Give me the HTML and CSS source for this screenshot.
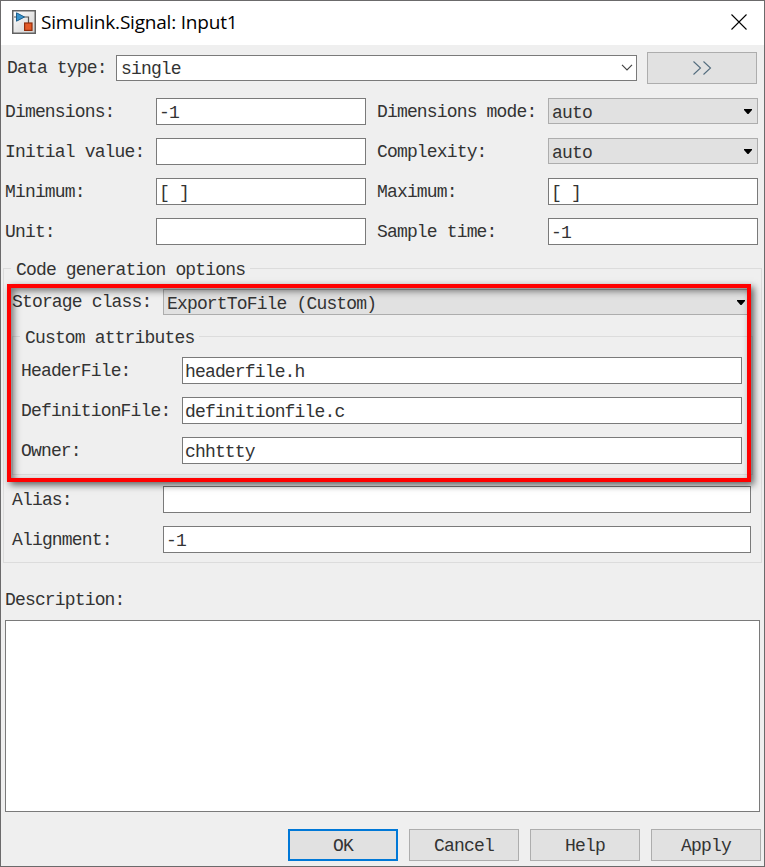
FILE: index.html
```html
<!DOCTYPE html>
<html lang="en">
<head>
<meta charset="utf-8">
<title>Simulink.Signal: Input1</title>
<link rel="stylesheet" href="styles.css">
</head>
<body>
<main class="dialog">
  <header class="titlebar">
    <svg class="app-icon" width="24" height="24" viewBox="0 0 24 24">
      <defs><linearGradient id="bg" x1="0" y1="0" x2="1" y2="1"><stop offset="0" stop-color="#fff"/><stop offset="1" stop-color="#cfcfcf"/></linearGradient></defs>
      <rect x="0.75" y="0.75" width="22.5" height="22.5" fill="url(#bg)" stroke="#626262" stroke-width="1.5"/>
      <path d="M2 7h3M12 7h4.500v6" fill="none" stroke="#555" stroke-width="1.2"/>
      <path d="M4.500 2.800v8.400L12.500 7z" fill="#3a94cc" stroke="#1b5e8c" stroke-width="1"/>
      <rect x="12.600" y="13" width="7.400" height="7.400" fill="#e35a28" stroke="#932d0b" stroke-width="1.2"/>
    </svg>
    <h1 class="title">Simulink.Signal: Input1</h1>
    <svg class="close" width="16" height="16" viewBox="0 0 16 16"><path d="M.5.5l15 15M15.500.5l-15 15" stroke="#000" stroke-width="1.1"/></svg>
  </header>

  <section class="type-row">
    <span class="label">Data type:</span>
    <div class="field combo">single<svg width="12" height="7" viewBox="0 0 12 7"><path d="M1 .8l5 5 5-5" fill="none" stroke="#444" stroke-width="1.2"/></svg></div>
    <div class="button more"><svg width="20" height="16" viewBox="0 0 20 16"><path d="M1.500 1.500l7 6.500-7 6.500M11.500 1.500l7 6.500-7 6.500" fill="none" stroke="#526b7d" stroke-width="1.1"/></svg></div>
  </section>

  <section class="props">
    <span class="label">Dimensions:</span><div class="field">-1</div>
    <span class="label">Dimensions mode:</span><div class="field select">auto<i class="arrow"></i></div>
    <span class="label">Initial value:</span><div class="field"></div>
    <span class="label">Complexity:</span><div class="field select">auto<i class="arrow"></i></div>
    <span class="label">Minimum:</span><div class="field">[ ]</div>
    <span class="label">Maximum:</span><div class="field">[ ]</div>
    <span class="label">Unit:</span><div class="field"></div>
    <span class="label">Sample time:</span><div class="field">-1</div>
  </section>

  <section class="group codegen">
    <h2 class="legend">Code generation options</h2>
    <div class="row storage"><span class="label">Storage class:</span><div class="field select">ExportToFile (Custom)<i class="arrow"></i></div></div>
    <div class="group custom">
      <h3 class="legend">Custom attributes</h3>
      <div class="row"><span class="label">HeaderFile:</span><div class="field">headerfile.h</div></div>
      <div class="row"><span class="label">DefinitionFile:</span><div class="field">definitionfile.c</div></div>
      <div class="row"><span class="label">Owner:</span><div class="field">chhttty</div></div>
    </div>
    <div class="row"><span class="label">Alias:</span><div class="field"></div></div>
    <div class="row"><span class="label">Alignment:</span><div class="field">-1</div></div>
    <div class="highlight"></div>
  </section>

  <section class="description">
    <span class="label">Description:</span>
    <div class="textarea"></div>
  </section>

  <footer class="actions">
    <div class="button primary">OK</div>
    <div class="button">Cancel</div>
    <div class="button">Help</div>
    <div class="button">Apply</div>
  </footer>
</main>
</body>
</html>
```
FILE: styles.css
```css
* { box-sizing: border-box; }

body {
  margin: 0;
  background: #efefef;
}

.dialog {
  width: 765px;
  height: 867px;
  border: 1px solid #6b6a6b;
  background: #efefef;
  color: #333;
  font: 18px/26px "Liberation Mono", monospace;
  letter-spacing: -0.84px;
  display: flex;
  flex-direction: column;
}

.titlebar {
  height: 44px;
  flex: none;
  display: flex;
  align-items: center;
  padding: 0 17px 2px 11px;
  background: #fff;
}

.title {
  flex: 1;
  margin: 0 0 0 5px;
  font: 19px/26px "Open Sans", sans-serif;
  letter-spacing: -0.2px;
  color: #000;
}

.field {
  position: relative;
  height: 27px;
  padding: 1px 0 0 2px;
  border: 1px solid #7a7a7a;
  background: #fff;
  white-space: nowrap;
}

.select {
  height: 26px;
  padding-left: 3px;
  border-color: #adadad;
  background: #e1e1e1;
}

.arrow {
  position: absolute;
  right: 5px;
  top: 10px;
  width: 8px;
  height: 5px;
  background: #000;
  clip-path: polygon(0 0, 100% 0, 100% 20%, 56% 100%, 44% 100%, 0 20%);
}

.button {
  display: flex;
  align-items: center;
  justify-content: center;
  width: 110px;
  height: 32px;
  padding-top: 2px;
  border: 1px solid #adadad;
  background: #e1e1e1;
}

.primary { border: 2px solid #0078d7; }

.type-row {
  display: grid;
  grid-template-columns: 109px 521px 120px;
  height: 32px;
  margin-top: 7px;
  padding-left: 6px;
}

.type-row .label { padding-top: 3px; }

.combo {
  display: flex;
  align-items: center;
  justify-content: space-between;
  height: 26px;
  margin-top: 3px;
  padding: 2px 3px 0 4px;
}

.combo svg { margin-bottom: 3px; }

.more { margin-left: 10px; padding: 0; }

.props {
  display: grid;
  grid-template-columns: 151px 210px 182px 210px;
  grid-auto-rows: 27px;
  row-gap: 13px;
  margin-top: 14px;
  padding-left: 4px;
}

.props .label { padding-top: 1px; }
.props .label:nth-child(4n + 3) { padding-left: 11px; }

.group {
  position: relative;
  border: 1px solid #dcdcdc;
}

.legend {
  width: max-content;
  margin: -12px 0 6px -1px;
  padding: 0 5px;
  font: inherit;
  background: #efefef;
}

.codegen {
  height: 295px;
  margin: 23px 2px 0;
  padding: 0 10px 0 8px;
}

.row {
  display: grid;
  grid-template-columns: 151px 1fr;
  height: 27px;
  margin-bottom: 13px;
}

.row .label { padding-top: 1px; }

.storage { margin-bottom: 20px; }

.storage .label { padding-top: 0; }

.custom {
  height: 139px;
  margin: 0 -2px 11px 0;
  padding: 0 10px 0 8px;
}

.custom .row { grid-template-columns: 161px 1fr; }

.highlight {
  position: absolute;
  left: 3px;
  top: 15px;
  width: 744px;
  height: 198px;
  border: 4px solid #f00;
  box-shadow: 3px 3px 7px rgba(0, 0, 0, 0.6), inset 3px 3px 7px rgba(0, 0, 0, 0.5);
}

.description {
  display: flex;
  flex-direction: column;
  margin-top: 24px;
  padding: 0 4px;
}

.textarea {
  height: 192px;
  margin-top: 7px;
  border: 1px solid #7a7a7a;
  background: #fff;
}

.actions {
  display: flex;
  justify-content: flex-end;
  gap: 11px;
  margin-top: 17px;
  padding-right: 3px;
}
```
